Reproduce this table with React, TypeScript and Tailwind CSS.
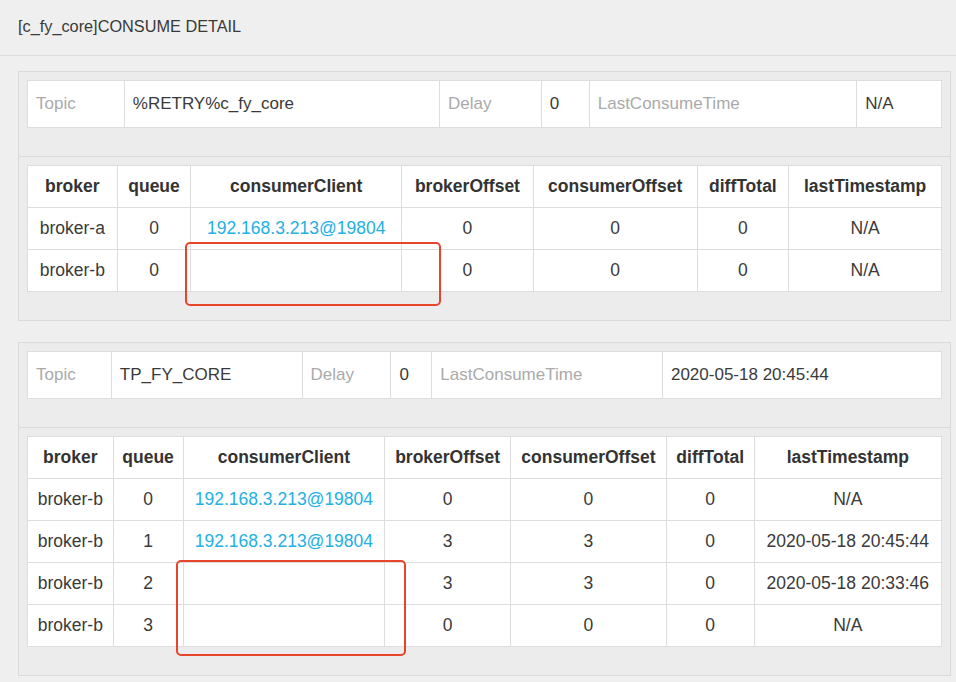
import React from "react";

type Info = { topic: string; delay: string; last: string; w: number[] };
type Row = { broker: string; queue: string; client: string; bo: string; co: string; diff: string; ts: string };
type Block = { info: Info; cols: number[]; rows: Row[]; mark: { left: number; top: number; width: number; height: number } };

const HEADS = ["broker", "queue", "consumerClient", "brokerOffset", "consumerOffset", "diffTotal", "lastTimestamp"];
const CLIENT = "192.168.3.213@19804";

const BLOCKS: Block[] = [
  {
    info: { topic: "%RETRY%c_fy_core", delay: "0", last: "N/A", w: [97, 316, 102, 48, 268, 85] },
    cols: [90, 74, 211, 132, 164, 92, 153],
    rows: [
      { broker: "broker-a", queue: "0", client: CLIENT, bo: "0", co: "0", diff: "0", ts: "N/A" },
      { broker: "broker-b", queue: "0", client: "", bo: "0", co: "0", diff: "0", ts: "N/A" },
    ],
    mark: { left: 166, top: 170, width: 256, height: 64 },
  },
  {
    info: { topic: "TP_FY_CORE", delay: "0", last: "2020-05-18 20:45:44", w: [84, 191, 89, 41, 231, 280] },
    cols: [86, 70, 202, 126, 156, 88, 188],
    rows: [
      { broker: "broker-b", queue: "0", client: CLIENT, bo: "0", co: "0", diff: "0", ts: "N/A" },
      { broker: "broker-b", queue: "1", client: CLIENT, bo: "3", co: "3", diff: "0", ts: "2020-05-18 20:45:44" },
      { broker: "broker-b", queue: "2", client: "", bo: "3", co: "3", diff: "0", ts: "2020-05-18 20:33:46" },
      { broker: "broker-b", queue: "3", client: "", bo: "0", co: "0", diff: "0", ts: "N/A" },
    ],
    mark: { left: 157, top: 217, width: 230, height: 96 },
  },
];

export default function App() {
  return (
    <div className="h-[682px] w-[956px] overflow-hidden bg-[#efefef] text-[17.5px] text-[#3a3a3a] [font-family:'Liberation_Sans',Arial,sans-serif]">
      {/* page header */}
      <div className="flex h-[56px] items-center border-b border-[#dcdcdc] pl-[18px] pb-[2px] text-[16.3px]">
        [c_fy_core]CONSUME DETAIL
      </div>

      <div className="flex flex-col gap-[21px] pl-[18px] pr-[5px] pt-[15px]">
        {BLOCKS.map((b, i) => (
          <ConsumePanel key={i} b={b} />
        ))}
      </div>
    </div>
  );
}

function ConsumePanel({ b }: { b: Block }) {
  return (
    <div className="relative border border-[#dadada] bg-[#ececec]">
      <div className="px-[8px] pt-[8px] pb-[28px]">
        <table className="table-fixed border-collapse bg-white text-[17px]">
          <colgroup>
            {b.info.w.map((w, i) => (
              <col key={i} style={{ width: w }} />
            ))}
          </colgroup>
          <tbody>
            <tr className="h-[47px]">
              <td className="border border-[#dddddd] px-[8px] text-[#aaaaaa]">Topic</td>
              <td className="border border-[#dddddd] px-[8px]">{b.info.topic}</td>
              <td className="border border-[#dddddd] px-[8px] text-[#aaaaaa]">Delay</td>
              <td className="border border-[#dddddd] px-[8px]">{b.info.delay}</td>
              <td className="border border-[#dddddd] px-[8px] text-[#aaaaaa]">LastConsumeTime</td>
              <td className="border border-[#dddddd] px-[8px]">{b.info.last}</td>
            </tr>
          </tbody>
        </table>
      </div>

      <div className="border-t border-[#dadada] px-[8px] pt-[8px] pb-[28px]">
        <table className="table-fixed border-collapse bg-white text-center">
          <colgroup>
            {b.cols.map((w, i) => (
              <col key={i} style={{ width: w }} />
            ))}
          </colgroup>
          <thead>
            <tr className="h-[42px]">
              {HEADS.map((h) => (
                <th key={h} className="border border-[#dddddd] font-bold text-[#333]">{h}</th>
              ))}
            </tr>
          </thead>
          <tbody>
            {b.rows.map((r, i) => (
              <tr key={i} className="h-[42px]">
                <td className="border border-[#dddddd]">{r.broker}</td>
                <td className="border border-[#dddddd]">{r.queue}</td>
                <td className="border border-[#dddddd] text-[#23b0e4]">{r.client}</td>
                <td className="border border-[#dddddd]">{r.bo}</td>
                <td className="border border-[#dddddd]">{r.co}</td>
                <td className="border border-[#dddddd]">{r.diff}</td>
                <td className="border border-[#dddddd]">{r.ts}</td>
              </tr>
            ))}
          </tbody>
        </table>
      </div>

      {/* red annotation box */}
      <div
        className="pointer-events-none absolute rounded-[5px] border-[2px] border-[#e8442c]"
        style={{ left: b.mark.left, top: b.mark.top, width: b.mark.width, height: b.mark.height }}
      />
    </div>
  );
}
